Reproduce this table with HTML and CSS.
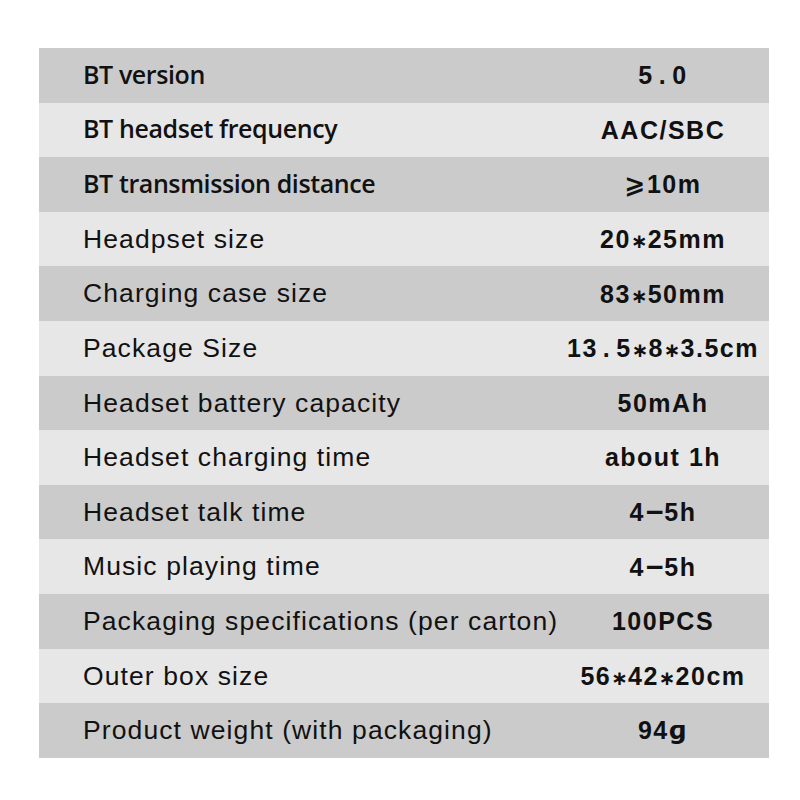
FILE: index.html
```html
<!DOCTYPE html>
<html>
<head>
<meta charset="utf-8">
<link rel="stylesheet" href="styles.css">
</head>
<body>
<div class="spec">
  <div class="row dark"><div class="k hum">BT version</div><div class="v">5<span class="fp">.</span>0</div></div>
  <div class="row light"><div class="k hum">BT headset frequency</div><div class="v">AAC/SBC</div></div>
  <div class="row dark"><div class="k hum">BT transmission distance</div><div class="v"><span class="ge">⩾</span>10m</div></div>
  <div class="row light"><div class="k">Headpset size</div><div class="v">20<span class="st">∗</span>25mm</div></div>
  <div class="row dark"><div class="k">Charging case size</div><div class="v">83<span class="st">∗</span>50mm</div></div>
  <div class="row light"><div class="k">Package Size</div><div class="v">13<span class="fp">.</span>5<span class="st">∗</span>8<span class="st">∗</span>3.5cm</div></div>
  <div class="row dark"><div class="k">Headset battery capacity</div><div class="v">50mAh</div></div>
  <div class="row light"><div class="k">Headset charging time</div><div class="v">about 1h</div></div>
  <div class="row dark"><div class="k">Headset talk time</div><div class="v">4<span class="dash">–</span>5h</div></div>
  <div class="row light"><div class="k">Music playing time</div><div class="v">4<span class="dash">–</span>5h</div></div>
  <div class="row dark"><div class="k">Packaging specifications (per carton)</div><div class="v">100PCS</div></div>
  <div class="row light"><div class="k">Outer box size</div><div class="v">56<span class="st">∗</span>42<span class="st">∗</span>20cm</div></div>
  <div class="row dark"><div class="k">Product weight (with packaging)</div><div class="v">94<span class="g">ɡ</span></div></div>
</div>
</body>
</html>
```

FILE: styles.css
```css
html, body {
  margin: 0;
  padding: 0;
  background: #ffffff;
}
body {
  padding: 48px 0 0 39px;
}
.spec {
  width: 730px;
  display: flex;
  flex-direction: column;
}
.row {
  height: 54.6px;
  display: grid;
  grid-template-columns: 518px 212px;
  align-items: center;
  color: #111111;
}
.dark { background: #cbcbcb; }
.light { background: #e7e7e7; }
.k {
  padding-left: 44px;
  font-family: "Liberation Sans", Arial, sans-serif;
  font-size: 26.5px;
  letter-spacing: 1.1px;
  white-space: nowrap;
  line-height: 1;
}
.k.hum {
  font-family: "Open Sans", "Noto Sans", sans-serif;
  font-weight: 600;
  font-size: 25px;
  letter-spacing: -0.4px;
  margin-top: -2px;
}
.v {
  text-align: center;
  font-family: "Liberation Sans", Arial, sans-serif;
  font-weight: 700;
  font-size: 25px;
  letter-spacing: 1.5px;
  white-space: nowrap;
  line-height: 30px;
}
.fp {
  padding: 0 5px;
}
.st {
  font-family: "DejaVu Sans", sans-serif;
  font-weight: 700;
  font-size: 0.8em;
  line-height: 0;
  letter-spacing: 0;
}
.ge {
  font-family: "DejaVu Sans", sans-serif;
  font-weight: 700;
  line-height: 0;
}
.g {
  font-family: "DejaVu Sans", sans-serif;
  font-weight: 700;
  line-height: 0;
}
.dash {
  font-size: 1.25em;
  line-height: 0;
  letter-spacing: 0;
  margin: 0 1px;
}
```
